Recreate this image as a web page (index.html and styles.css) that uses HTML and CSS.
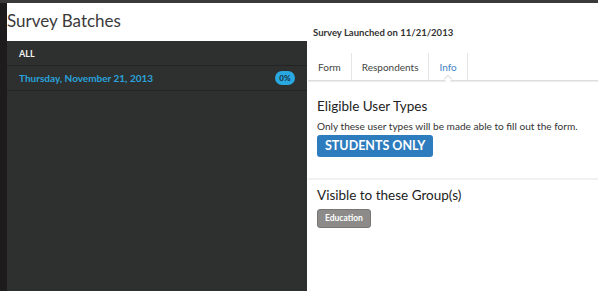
FILE: index.html
```html
<!DOCTYPE html>
<html>
<head>
<meta charset="utf-8">
<link rel="stylesheet" href="styles.css">
</head>
<body>
<div class="app">
  <div class="rail"></div>
  <div class="batches">
    <div class="batches-head">Survey Batches</div>
    <ul class="batch-list">
      <li class="batch-row all">ALL</li>
      <li class="batch-row date">Thursday, November 21, 2013<span class="pct">0%</span></li>
    </ul>
  </div>
  <div class="detail">
    <div class="detail-title">Survey Launched on 11/21/2013</div>
    <div class="tabs">
      <div class="tab">Form</div>
      <div class="tab">Respondents</div>
      <div class="tab active">Info</div>
    </div>
    <section class="block first">
      <h2 class="block-title">Eligible User Types</h2>
      <p class="block-note">Only these user types will be made able to fill out the form.</p>
      <span class="btn-type">STUDENTS ONLY</span>
    </section>
    <section class="block">
      <h2 class="block-title">Visible to these Group(s)</h2>
      <span class="chip">Education</span>
    </section>
  </div>
</div>
</body>
</html>
```
FILE: styles.css
```css
html, body {
  margin: 0;
  padding: 0;
  height: 100%;
}
body {
  background: #1e1b1c;
  font-family: Lato, "Open Sans", sans-serif;
  color: #333;
  border-top: 3px solid #3a3a3a;
  box-sizing: border-box;
  overflow: hidden;
}
.app {
  display: grid;
  grid-template-columns: 7px 300px 1fr;
  height: 288px;
}
.rail {
  background: #1e1b1c;
}
.batches {
  background: #2e302f;
  display: flex;
  flex-direction: column;
}
.batches-head {
  background: #fff;
  height: 38px;
  box-sizing: border-box;
  padding: 7px 0 0 0;
  font-size: 17px;
  font-weight: 400;
  color: #3a3a3a;
}
.batch-list {
  list-style: none;
  margin: 0;
  padding: 0;
}
.batch-row {
  height: 25px;
  box-sizing: border-box;
  border-bottom: 1px solid #232524;
  padding: 0 12px;
  display: flex;
  align-items: center;
  justify-content: space-between;
  font-weight: 700;
}
.batch-row.all {
  color: #f2f2f2;
  font-size: 9px;
}
.batch-row.date {
  color: #29a3dc;
  font-size: 10px;
}
.pct {
  background: #29a8e2;
  color: #17384a;
  font-size: 8px;
  font-weight: 900;
  border-radius: 8px;
  width: 20px;
  height: 14px;
  display: inline-flex;
  align-items: center;
  justify-content: center;
}
.detail {
  background: #fff;
  padding-left: 1px;
}
.detail-title {
  font-size: 9.5px;
  font-weight: 700;
  color: #333;
  padding: 24px 0 0 5px;
  height: 50px;
  box-sizing: border-box;
}
.tabs {
  display: flex;
  height: 27px;
  border-bottom: 1px solid #dedede;
  box-shadow: 0 1px 0 #ececec;
}
.tab {
  font-size: 10px;
  color: #444;
  padding: 0 10px;
  display: flex;
  align-items: center;
  border-right: 1px solid #e6e6e6;
}
.tab.active {
  color: #3f84c5;
  position: relative;
}
.tab.active::after {
  content: "";
  position: absolute;
  left: 50%;
  bottom: -2px;
  margin-left: -3px;
  width: 5px;
  height: 5px;
  background: #fff;
  border-left: 1px solid #dedede;
  border-top: 1px solid #dedede;
  transform: rotate(45deg);
}
.block {
  padding: 0 9px;
}
.block.first {
  padding-top: 16px;
  padding-bottom: 21px;
  border-bottom: 2px solid #f1f1f1;
}
.block-title {
  margin: 0;
  font-size: 13.5px;
  font-weight: 400;
  color: #222;
  line-height: 18px;
}
.block:not(.first) .block-title {
  margin-top: 6px;
}
.block-note {
  margin: 5px 0 2px 0;
  font-size: 10.1px;
  color: #333;
  line-height: 12px;
}
.btn-type {
  display: inline-block;
  background: #2d7cbe;
  color: #fff;
  font-weight: 700;
  font-size: 12.5px;
  border-radius: 3px;
  padding: 0 8px;
  height: 22px;
  line-height: 22px;
}
.chip {
  display: inline-block;
  margin-top: 5px;
  background: #8c8b89;
  border: 1px solid #777674;
  color: #fff;
  font-weight: 700;
  font-size: 8.5px;
  border-radius: 3px;
  padding: 0 7px;
  height: 17px;
  line-height: 17px;
}
```
